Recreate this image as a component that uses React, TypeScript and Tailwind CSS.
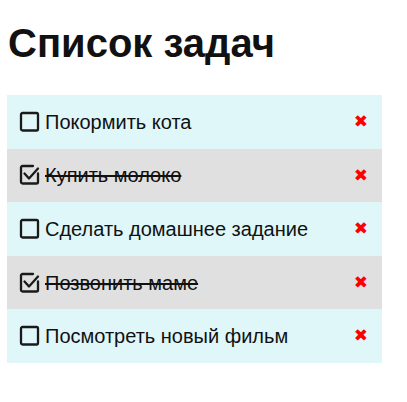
const tasks = [
  { title: 'Покормить кота', done: false },
  { title: 'Купить молоко', done: true },
  { title: 'Сделать домашнее задание', done: false },
  { title: 'Позвонить маме', done: true },
  { title: 'Посмотреть новый фильм', done: false },
];

function BoxIcon({ checked }: { checked: boolean }) {
  return (
    <svg width="24" height="24" viewBox="0 0 24 24" fill="none" stroke="#1a1a1a" strokeWidth="2.3" strokeLinecap="round" strokeLinejoin="round">
      {checked ? (
        <>
          <path d="M20 10.5V19a1.5 1.5 0 0 1-1.5 1.5h-14A1.5 1.5 0 0 1 3 19V4.5A1.5 1.5 0 0 1 4.5 3H15" />
          <path d="M6.5 10.5l4.5 5L20 5.5" />
        </>
      ) : (
        <rect x="3" y="3" width="17" height="17.5" rx="1.5" />
      )}
    </svg>
  );
}

export default function App() {
  return (
    <div className="px-[7px] font-['Liberation_Sans',Arial,sans-serif] text-[#111]">
      <h1 className="pt-[20px] pl-[1px] text-[40px] font-bold leading-[46px]">Список задач</h1>
      <ul className="mt-[29px] w-[375px]">
        {tasks.map((t, i) => (
          <li
            key={i}
            className={`flex h-[53.6px] items-center pl-[11px] pr-[14px] ${i % 2 ? 'bg-[#e0e0e0]' : 'bg-[#e0f7fa]'}`}
          >
            <BoxIcon checked={t.done} />
            <span className={`ml-[3px] text-[20px] ${t.done ? 'line-through' : ''}`}>{t.title}</span>
            <span className="ml-auto font-['DejaVu_Sans',sans-serif] text-[17px] text-[#ff0000]">✖</span>
          </li>
        ))}
      </ul>
    </div>
  );
}
